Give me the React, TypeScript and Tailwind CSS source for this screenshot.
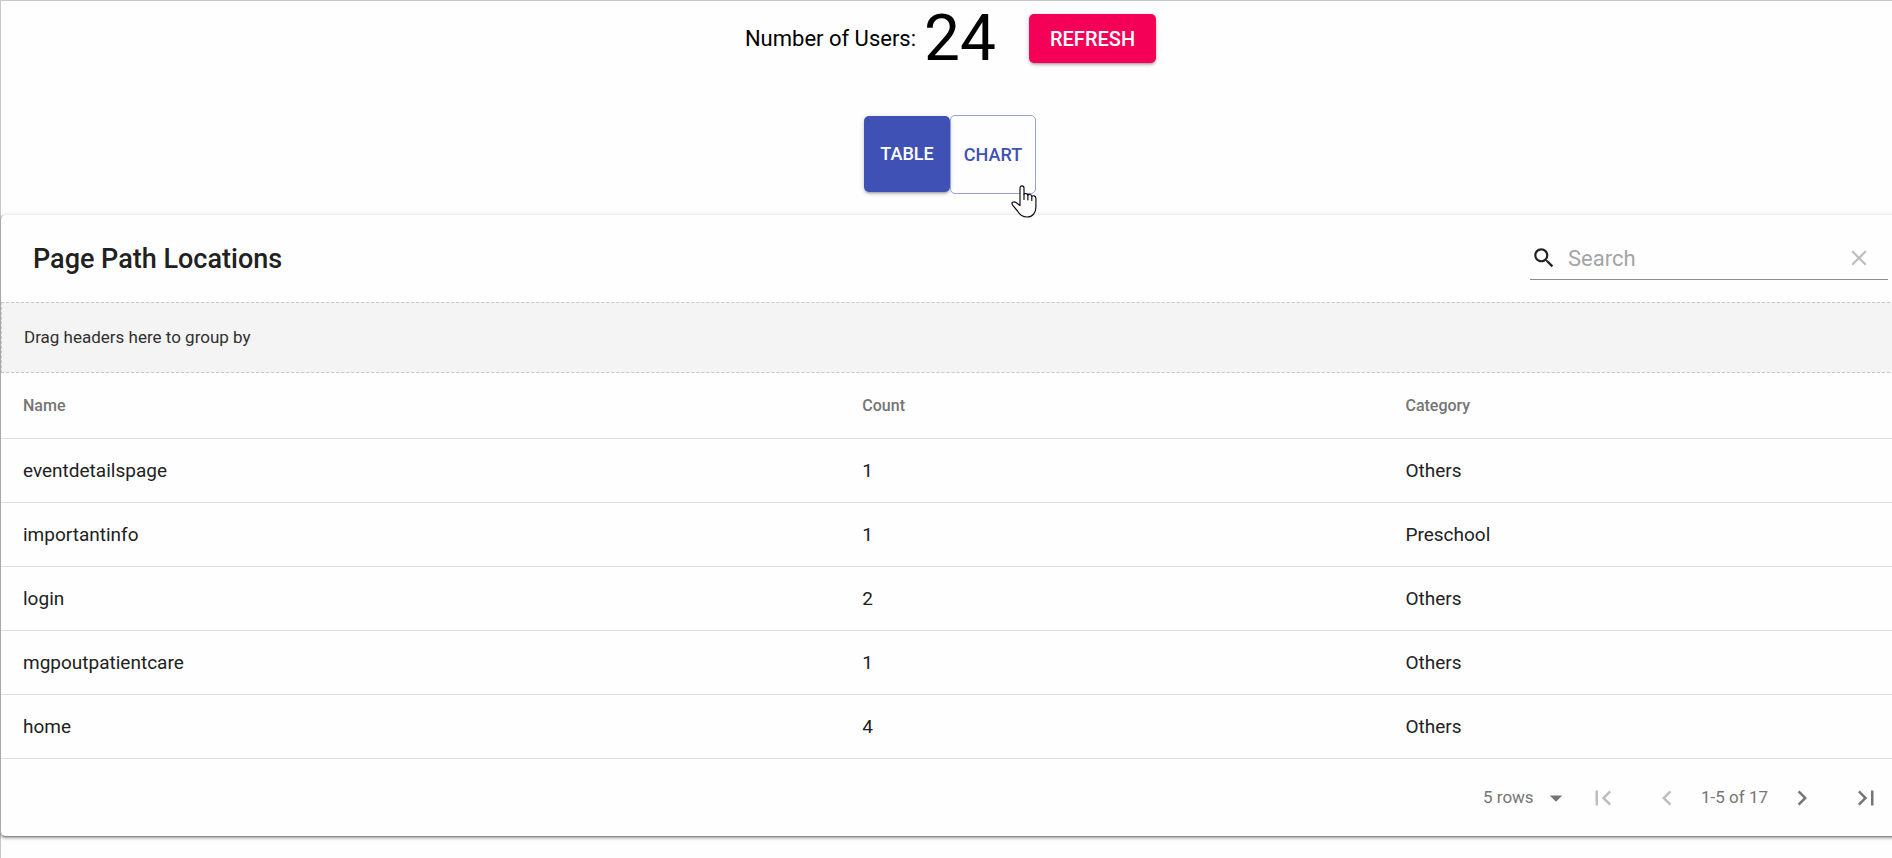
import { useState } from "react";
import type { ReactNode } from "react";

const rows = [
  { name: "eventdetailspage", count: 1, category: "Others" },
  { name: "importantinfo", count: 1, category: "Preschool" },
  { name: "login", count: 2, category: "Others" },
  { name: "mgpoutpatientcare", count: 1, category: "Others" },
  { name: "home", count: 4, category: "Others" },
];

function Icon({ d, className }: { d: string; className: string }) {
  return (
    <svg viewBox="0 0 24 24" fill="currentColor" aria-hidden="true" className={className}>
      <path d={d} />
    </svg>
  );
}

function HandPointer() {
  return (
    <svg
      viewBox="0 0 26 33"
      aria-hidden="true"
      className="pointer-events-none absolute -right-px top-[70px] h-[33px] w-[26px]"
      fill="#fff"
      stroke="#111"
      strokeWidth="1.2"
      strokeLinejoin="round"
      strokeLinecap="round"
    >
      <path d="M9 20V3.200C9 .2 13 .2 13 3.200V9.500C13.500 8 16.700 8.200 16.900 10.400C17.500 8.900 20.500 9.200 20.800 11.500C21.600 10.200 24.900 10.600 24.900 13.400V22C24.900 28 21.500 32 16 32C11 32 8.500 29.500 6.500 26L1.600 20.200C-.2 17.800 2.600 15.800 5 17.500L9 20.500" />
      <path d="M13 9.500V14.500M16.900 10.400V14.800M20.800 11.500V15.500" fill="none" />
    </svg>
  );
}

function PageButton({ label, d, disabled }: { label: string; d: string; disabled?: boolean }) {
  return (
    <button
      type="button"
      aria-label={label}
      disabled={disabled}
      className="flex h-12 w-16 items-center justify-center text-[#757575] disabled:text-[#bdbdbd]"
    >
      <Icon d={d} className="size-[30px]" />
    </button>
  );
}

function HeadCell({ children, className }: { children: ReactNode; className: string }) {
  return (
    <th scope="col" className={`h-[66px] border-b border-[#e0e0e0] px-[22px] text-left text-base font-medium text-[#757575] ${className}`}>
      {children}
    </th>
  );
}

function BodyCell({ children }: { children: ReactNode }) {
  return <td className="h-16 border-b border-[#e0e0e0] px-[22px] pt-0.5">{children}</td>;
}

export default function App() {
  const [search, setSearch] = useState("");

  return (
    <main className="flex min-h-screen flex-col overflow-x-hidden border-t border-[#c8c8c8] bg-[#fefefe] font-[Roboto,sans-serif] text-black">
      <div className="grow border-l border-[#c8c8c8]">
        <header className="flex h-[75px] items-center justify-center pl-2">
          <p className="flex items-center text-[22px]">
            Number of Users:
            <span className="ml-2 text-[64px] leading-[75px]">24</span>
          </p>
          <button
            type="button"
            className="ml-[33px] h-[49px] rounded-[5px] bg-[#f50057] px-[21px] text-xl font-medium text-white shadow-[0_3px_2px_-2px_rgba(0,0,0,0.2),0_2px_3px_rgba(0,0,0,0.14),0_1px_6px_rgba(0,0,0,0.12)]"
          >
            REFRESH
          </button>
        </header>

        <nav aria-label="View" className="mt-[39px] flex items-start justify-center pl-[7px] text-lg font-medium">
          <button
            type="button"
            aria-pressed="true"
            className="mt-px h-[76px] w-[86px] rounded-[5px] bg-[#3f51b5] text-white shadow-[0_3px_2px_-2px_rgba(0,0,0,0.2),0_2px_3px_rgba(0,0,0,0.14),0_1px_6px_rgba(0,0,0,0.12)]"
          >
            TABLE
          </button>
          <div className="relative">
            <button type="button" aria-pressed="false" className="block h-[79px] w-[86px] rounded-[5px] border border-[#95a2d6] text-[#3f51b5]">
              CHART
            </button>
            <HandPointer />
          </div>
        </nav>

        <section className="-ml-px -mr-2 mt-[21px] rounded-[5px] border-l border-[#a8a8a8] shadow-[0_3px_1px_-2px_rgba(0,0,0,0.2),0_2px_3px_rgba(0,0,0,0.3),0_1px_6px_rgba(0,0,0,0.16)]">
          <div className="flex h-[87px] items-center justify-between pl-8 pr-3">
            <h1 className="pt-0.5 text-[27px] font-medium text-[#212121]">Page Path Locations</h1>
            <div className="flex h-[43px] w-[358px] items-center border-b border-[#8d8d8d]">
              <label htmlFor="search" aria-label="Search" className="flex w-[38px] pl-px text-[#212121]">
                <Icon
                  className="size-[26px]"
                  d="M15.500 14h-.79l-.28-.27C15.410 12.590 16 11.110 16 9.500 16 5.910 13.090 3 9.500 3S3 5.910 3 9.500 5.910 16 9.500 16c1.610 0 3.090-.59 4.230-1.570l.27.28v.79l5 4.990L20.490 19l-4.990-5zm-6 0C7.010 14 5 11.990 5 9.500S7.010 5 9.500 5 14 7.010 14 9.500 11.990 14 9.500 14z"
                />
              </label>
              <input
                id="search"
                type="text"
                placeholder="Search"
                value={search}
                onChange={(e) => setSearch(e.target.value)}
                className="min-w-0 flex-1 bg-transparent text-[22px] outline-none placeholder:text-[#a5a5a5]"
              />
              <button
                type="button"
                aria-label="Clear search"
                disabled={!search}
                onClick={() => setSearch("")}
                className="flex size-[58px] items-center justify-center text-[#757575] disabled:text-[#bdbdbd]"
              >
                <Icon
                  className="size-[26px]"
                  d="M19 6.410L17.590 5 12 10.590 6.410 5 5 6.410 10.590 12 5 17.590 6.410 19 12 13.410 17.590 19 19 17.590 13.410 12z"
                />
              </button>
            </div>
          </div>

          <div className="flex h-[71px] items-center border border-dashed border-[#c8c8c8] bg-[#f4f4f4] px-[22px] text-[17px] text-[#303030]">
            Drag headers here to group by
          </div>

          <table className="w-full table-fixed border-separate border-spacing-0">
            <thead>
              <tr>
                <HeadCell className="w-[44.2%]">Name</HeadCell>
                <HeadCell className="w-[28.6%]">Count</HeadCell>
                <HeadCell className="w-[27.2%]">Category</HeadCell>
              </tr>
            </thead>
            <tbody className="text-[19px] text-[#212121]">
              {rows.map((row) => (
                <tr key={row.name}>
                  <BodyCell>{row.name}</BodyCell>
                  <BodyCell>{row.count}</BodyCell>
                  <BodyCell>{row.category}</BodyCell>
                </tr>
              ))}
            </tbody>
          </table>

          <footer className="flex h-[77px] items-center justify-end pr-[2px] text-[17px] text-[#757575]">
            <div className="relative flex items-center">
              <select aria-label="Rows per page" defaultValue="5" className="w-[88px] appearance-none bg-transparent outline-none">
                <option value="5">5 rows</option>
                <option value="10">10 rows</option>
                <option value="20">20 rows</option>
              </select>
              <Icon className="pointer-events-none absolute right-0 size-[30px]" d="M7 10l5 5 5-5z" />
            </div>
            <PageButton label="First page" disabled d="M18.410 16.590L13.820 12l4.590-4.590L17 6l-6 6 6 6zM6 6h2v12H6z" />
            <PageButton label="Previous page" disabled d="M15.410 7.410L14 6l-6 6 6 6 1.410-1.410L10.830 12z" />
            <span className="px-0.5">1-5 of 17</span>
            <PageButton label="Next page" d="M10 6L8.590 7.410 13.170 12l-4.580 4.590L10 18l6-6z" />
            <PageButton label="Last page" d="M5.590 7.410L10.180 12l-4.590 4.590L7 18l6-6-6-6zM16 6h2v12h-2z" />
          </footer>
        </section>
      </div>
    </main>
  );
}
